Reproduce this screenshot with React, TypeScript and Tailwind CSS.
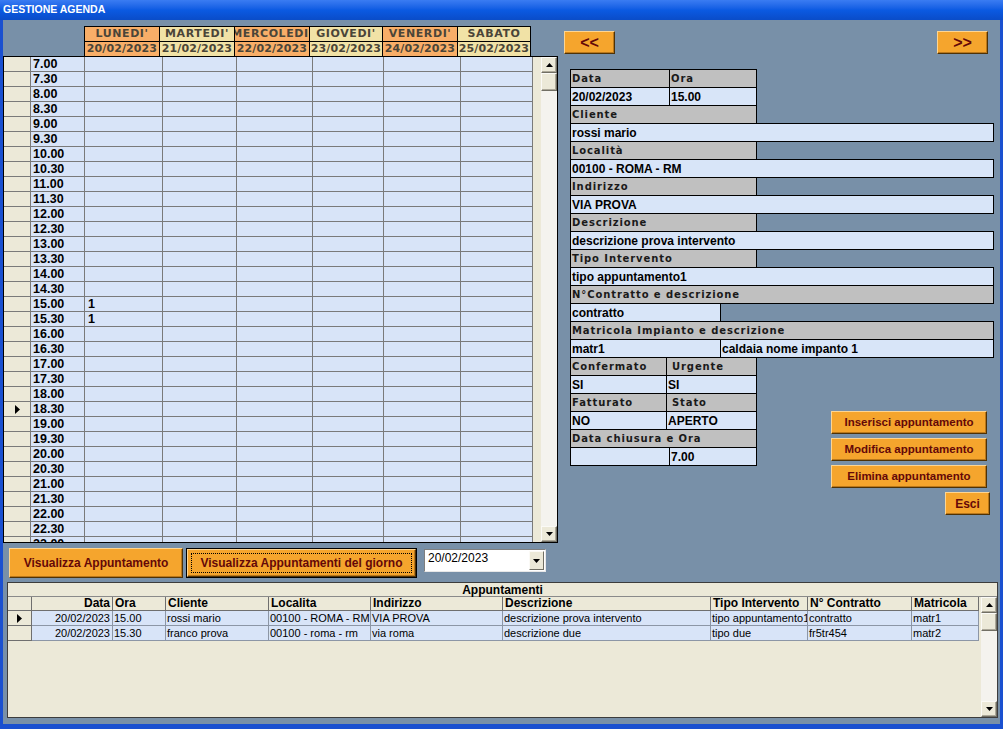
import React from 'react';

// Fonts: Tahoma-ish body text -> Liberation Sans, Verdana-ish labels -> DejaVu Sans
const SANS = "font-['Liberation_Sans',Arial,sans-serif]";
const VERD = "font-['DejaVu_Sans',Verdana,sans-serif]";

const DAYS = [
  { name: "LUNEDI'", date: '20/02/2023', w: 'w-[76px]', bg: 'bg-[#f8ae68]' },
  { name: "MARTEDI'", date: '21/02/2023', w: 'w-[76px]', bg: 'bg-[#f1e2a6]' },
  { name: "MERCOLEDI'", date: '22/02/2023', w: 'w-[76px]', bg: 'bg-[#f8ae68]' },
  { name: "GIOVEDI'", date: '23/02/2023', w: 'w-[74px]', bg: 'bg-[#f1e2a6]' },
  { name: "VENERDI'", date: '24/02/2023', w: 'w-[76px]', bg: 'bg-[#f8ae68]' },
  { name: 'SABATO', date: '25/02/2023', w: 'w-[74px]', bg: 'bg-[#f1e2a6]' },
];

const DAY_COLS = ['w-[78px]', 'w-[74px]', 'w-[76px]', 'w-[71px]', 'w-[77px]', 'w-[72px]'];

const TIMES: string[] = [];
for (let h = 7; h <= 23; h++) {
  TIMES.push(`${h}.00`);
  if (h < 23) TIMES.push(`${h}.30`);
}

const APPTS = [
  {
    data: '20/02/2023', ora: '15.00', cliente: 'rossi mario', loc: '00100 - ROMA - RM',
    ind: 'VIA PROVA', desc: 'descrizione prova intervento', tipo: 'tipo appuntamento1',
    contr: 'contratto', matr: 'matr1',
  },
  {
    data: '20/02/2023', ora: '15.30', cliente: 'franco prova', loc: '00100 - roma - rm',
    ind: 'via roma', desc: 'descrizione due', tipo: 'tipo due',
    contr: 'fr5tr454', matr: 'matr2',
  },
];

function Arrow({ dir }: { dir: 'up' | 'down' }) {
  return (
    <svg width="7" height="4" viewBox="0 0 7 4">
      <polygon points={dir === 'up' ? '3.5,0 7,4 0,4' : '0,0 7,0 3.5,4'} fill="#000" />
    </svg>
  );
}

function ScrollBtn({ dir }: { dir: 'up' | 'down' }) {
  return (
    <div className="h-[16px] shrink-0 bg-[#ece9d8] border border-t-[#fbfaf6] border-l-[#fbfaf6] border-r-[#716f64] border-b-[#716f64] shadow-[inset_-1px_-1px_0_#aca899] flex items-center justify-center">
      <Arrow dir={dir} />
    </div>
  );
}

function ScrollBar({ className }: { className: string }) {
  return (
    <div className={`${className} flex flex-col bg-[#f4f3ee]`}>
      <ScrollBtn dir="up" />
      <div className="h-[18px] shrink-0 bg-[#ece9d8] border border-t-[#fbfaf6] border-l-[#fbfaf6] border-r-[#716f64] border-b-[#716f64] shadow-[inset_-1px_-1px_0_#aca899]" />
      <div className="flex-1" />
      <ScrollBtn dir="down" />
    </div>
  );
}

function Pointer() {
  return (
    <svg width="5" height="9" viewBox="0 0 5 9">
      <polygon points="0,0 5,4.5 0,9" fill="#000" />
    </svg>
  );
}

function OrangeBtn({ className, children, isDefault }: { className: string; children: React.ReactNode; isDefault?: boolean }) {
  return (
    <div className={`${className} shrink-0 ${isDefault ? 'border border-black' : ''}`}>
      <div className={`relative h-full w-full bg-[#f5a52d] border border-t-[#fdd592] border-l-[#fdd592] border-r-[#4e3206] border-b-[#4e3206] shadow-[inset_-1px_-1px_0_#b9771a] flex items-center justify-center text-[#640808] font-bold ${SANS}`}>
        {isDefault && <div className="absolute inset-[3px] border border-dotted border-black" />}
        {children}
      </div>
    </div>
  );
}

// --- right-hand detail form ---

function Cell({ w, label, children, first, pad }: { w: string; label?: boolean; children?: React.ReactNode; first?: boolean; pad?: string }) {
  return (
    <div
      className={`${w} h-[19px] shrink-0 border border-black flex items-center overflow-hidden whitespace-nowrap ${first ? '' : '-ml-px'} ${
        label
          ? `bg-[#c0c0c0] ${VERD} text-[10px] tracking-[0.9px] font-bold text-[#1a1a1a]`
          : `bg-[#d8e5f8] ${SANS} text-[12px] font-bold text-black`
      } ${pad ?? 'pl-[1px]'}`}
    >
      {children}
    </div>
  );
}

function Row({ children, first }: { children: React.ReactNode; first?: boolean }) {
  return <div className={`flex ${first ? '' : '-mt-px'}`}>{children}</div>;
}

function DetailForm() {
  return (
    <div className="ml-[12px] mt-[15px] w-[424px] flex flex-col">
      <Row first>
        <Cell w="w-[100px]" label first>Data</Cell>
        <Cell w="w-[88px]" label>Ora</Cell>
      </Row>
      <Row>
        <Cell w="w-[100px]" first>20/02/2023</Cell>
        <Cell w="w-[88px]">15.00</Cell>
      </Row>
      <Row><Cell w="w-[187px]" label first>Cliente</Cell></Row>
      <Row><Cell w="w-[424px]" first>rossi mario</Cell></Row>
      <Row><Cell w="w-[187px]" label first>Località</Cell></Row>
      <Row><Cell w="w-[424px]" first>00100 - ROMA - RM</Cell></Row>
      <Row><Cell w="w-[187px]" label first>Indirizzo</Cell></Row>
      <Row><Cell w="w-[424px]" first>VIA PROVA</Cell></Row>
      <Row><Cell w="w-[187px]" label first>Descrizione</Cell></Row>
      <Row><Cell w="w-[424px]" first>descrizione prova intervento</Cell></Row>
      <Row><Cell w="w-[187px]" label first>Tipo Intervento</Cell></Row>
      <Row><Cell w="w-[424px]" first>tipo appuntamento1</Cell></Row>
      <Row><Cell w="w-[424px]" label first>N°Contratto e descrizione</Cell></Row>
      <Row><Cell w="w-[151px]" first>contratto</Cell></Row>
      <Row><Cell w="w-[424px]" label first>Matricola Impianto e descrizione</Cell></Row>
      <Row>
        <Cell w="w-[151px]" first>matr1</Cell>
        <Cell w="w-[274px]">caldaia nome impanto 1</Cell>
      </Row>

      <div className="flex -mt-px">
        <div className="flex flex-col">
          <Row first>
            <Cell w="w-[97px]" label first>Confermato</Cell>
            <Cell w="w-[91px]" label pad="pl-[5px]">Urgente</Cell>
          </Row>
          <Row>
            <Cell w="w-[97px]" first>SI</Cell>
            <Cell w="w-[91px]">SI</Cell>
          </Row>
          <Row>
            <Cell w="w-[97px]" label first>Fatturato</Cell>
            <Cell w="w-[91px]" label pad="pl-[5px]">Stato</Cell>
          </Row>
          <Row>
            <Cell w="w-[97px]" first>NO</Cell>
            <Cell w="w-[91px]">APERTO</Cell>
          </Row>
          <Row><Cell w="w-[187px]" label first>Data chiusura e Ora</Cell></Row>
          <Row>
            <Cell w="w-[100px]" first />
            <Cell w="w-[88px]">7.00</Cell>
          </Row>
        </div>

        <div className="ml-[74px] mt-[54px] flex flex-col gap-[4px]">
          <OrangeBtn className="w-[156px] h-[23px] text-[11.5px]">Inserisci appuntamento</OrangeBtn>
          <OrangeBtn className="w-[156px] h-[23px] text-[11.5px]">Modifica appuntamento</OrangeBtn>
          <OrangeBtn className="w-[156px] h-[23px] text-[11.5px]">Elimina appuntamento</OrangeBtn>
          <OrangeBtn className="ml-[114px] w-[45px] h-[23px] text-[12px]">Esci</OrangeBtn>
        </div>
      </div>
    </div>
  );
}

// --- left-hand weekly agenda grid ---

function Agenda() {
  return (
    <div className="w-[555px] shrink-0 flex flex-col">
      {/* day header */}
      <div className={`ml-[81px] mt-[6px] flex ${VERD} text-[11px] font-bold text-[#4a4538]`}>
        {DAYS.map((d, i) => (
          <div key={d.name} className={`${d.w} flex flex-col ${i === 0 ? '' : '-ml-px'}`}>
            <div className={`h-[16px] border border-black ${d.bg} flex items-center justify-center overflow-hidden whitespace-nowrap tracking-[0.6px]`}>
              {d.name}
            </div>
            <div className={`h-[16px] -mt-px border border-black ${d.bg} flex items-center justify-center overflow-hidden whitespace-nowrap tracking-[0.1px]`}>
              {d.date}
            </div>
          </div>
        ))}
      </div>

      {/* grid body */}
      <div className="-mt-px h-[487px] border border-black bg-[#ece9d8] flex overflow-hidden">
        <div className="flex-1 flex flex-col overflow-hidden">
          {TIMES.map((t) => (
            <div key={t} className="flex h-[15px] shrink-0">
              <div className="w-[27px] shrink-0 border-r border-b border-[#7a7a7a] bg-[#ece9d8] flex items-center justify-center">
                {t === '18.30' && <Pointer />}
              </div>
              <div className={`w-[54px] shrink-0 border-r border-b border-[#7a7a7a] bg-[#d8e4f8] pl-[2px] ${SANS} text-[12.5px] font-bold leading-[14px] text-black`}>
                {t}
              </div>
              {DAY_COLS.map((w, c) => (
                <div
                  key={c}
                  className={`${w} shrink-0 border-r border-b border-[#7a7a7a] bg-[#d8e4f8] pl-[3px] ${SANS} text-[12.5px] font-bold leading-[14px] text-black`}
                >
                  {c === 0 && (t === '15.00' || t === '15.30') ? '1' : ''}
                </div>
              ))}
            </div>
          ))}
        </div>
        <ScrollBar className="w-[16px] shrink-0" />
      </div>

      {/* buttons under the grid */}
      <div className="mt-[5px] ml-[6px] flex items-start">
        <OrangeBtn className="w-[174px] h-[30px] text-[12px]">Visualizza Appuntamento</OrangeBtn>
        <OrangeBtn className="ml-[3px] w-[231px] h-[30px] text-[12px]" isDefault>
          Visualizza Appuntamenti del giorno
        </OrangeBtn>
        <div className="ml-[7px] mt-[1px] w-[122px] h-[23px] border border-t-[#7f7f7f] border-l-[#7f7f7f] border-r-[#e8e8e8] border-b-[#e8e8e8] bg-white flex">
          <div className={`flex-1 pl-[3px] pt-[1px] ${SANS} text-[12px] leading-[14px] text-black`}>20/02/2023</div>
          <div className="w-[15px] my-px mr-px bg-[#ece9d8] border border-t-[#fbfaf6] border-l-[#fbfaf6] border-r-[#716f64] border-b-[#716f64] flex items-center justify-center">
            <Arrow dir="down" />
          </div>
        </div>
      </div>
    </div>
  );
}

// --- bottom appointments list ---

const TCOLS: { key: keyof (typeof APPTS)[number]; label: string; w: string; right?: boolean }[] = [
  { key: 'data', label: 'Data', w: 'w-[81px]', right: true },
  { key: 'ora', label: 'Ora', w: 'w-[53px]' },
  { key: 'cliente', label: 'Cliente', w: 'w-[103px]' },
  { key: 'loc', label: 'Localita', w: 'w-[102px]' },
  { key: 'ind', label: 'Indirizzo', w: 'w-[132px]' },
  { key: 'desc', label: 'Descrizione', w: 'w-[208px]' },
  { key: 'tipo', label: 'Tipo Intervento', w: 'w-[97px]' },
  { key: 'contr', label: 'N° Contratto', w: 'w-[104px]' },
  { key: 'matr', label: 'Matricola', w: 'w-[67px]' },
];

function AppointmentsTable() {
  return (
    <div className={`ml-[4px] w-[991px] h-[136px] border border-[#3c3c3c] bg-[#ece9d8] flex flex-col ${SANS} text-black`}>
      <div className="h-[14px] shrink-0 border-b border-[#8a8a8a] flex items-center justify-center text-[12px] font-bold">
        Appuntamenti
      </div>
      <div className="flex-1 flex overflow-hidden">
        <div className="flex-1 flex flex-col">
          <div className="flex h-[14px] shrink-0 text-[12px] font-bold leading-[13px]">
            <div className="w-[24px] shrink-0 border-r border-b border-[#6f6f6f]" />
            {TCOLS.map((c) => (
              <div
                key={c.key}
                className={`${c.w} shrink-0 border-r border-b border-[#6f6f6f] px-[2px] whitespace-nowrap overflow-hidden ${c.right ? 'text-right' : ''}`}
              >
                {c.label}
              </div>
            ))}
          </div>
          {APPTS.map((a, r) => (
            <div key={r} className="flex h-[15px] shrink-0 text-[11px] leading-[14px]">
              <div className="w-[24px] shrink-0 border-r border-b border-[#6f6f6f] bg-[#ece9d8] flex items-center justify-center">
                {r === 0 && <Pointer />}
              </div>
              {TCOLS.map((c) => (
                <div
                  key={c.key}
                  className={`${c.w} shrink-0 border-r border-b border-[#8c96a6] bg-[#d8e4f8] whitespace-nowrap overflow-hidden ${c.right ? 'text-right pr-[2px]' : 'pl-[1px]'}`}
                >
                  {a[c.key]}
                </div>
              ))}
            </div>
          ))}
        </div>
        <ScrollBar className="w-[16px] shrink-0" />
      </div>
    </div>
  );
}

export default function App() {
  return (
    <div className="w-[1003px] h-[729px] bg-[#1a50d0] flex flex-col overflow-hidden">
      <div className={`h-[20px] shrink-0 bg-gradient-to-b from-[#3a7cf2] via-[#0b5ae2] to-[#0a4cc8] px-[3px] flex items-center text-white font-bold text-[10.5px] ${SANS}`}>
        GESTIONE AGENDA
      </div>
      <div className="mx-[3px] h-[704px] shrink-0 bg-[#7890a8] flex flex-col">
        <div className="flex h-[562px] shrink-0">
          <Agenda />
          <div className="flex-1 flex flex-col">
            <div className="mt-[11px] pl-[6px] pr-[12px] flex justify-between">
              <OrangeBtn className="w-[51px] h-[23px] text-[16px] font-black">&lt;&lt;</OrangeBtn>
              <OrangeBtn className="w-[51px] h-[23px] text-[16px] font-black">&gt;&gt;</OrangeBtn>
            </div>
            <DetailForm />
          </div>
        </div>
        <AppointmentsTable />
      </div>
    </div>
  );
}
